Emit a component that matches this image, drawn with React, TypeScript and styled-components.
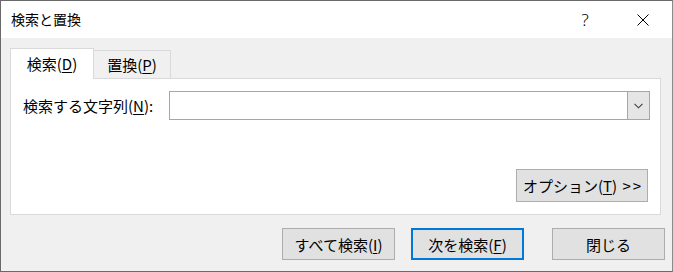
import styled, { createGlobalStyle } from 'styled-components'

const GlobalStyle = createGlobalStyle`
   html, body {
      margin: 0;
      padding: 0;
      background: #3a4a5a;
   }
   * {
      box-sizing: border-box;
   }
`

const FONT = `'Noto Sans CJK JP', 'Noto Sans', sans-serif`

const CloseIcon = () => (
   <svg width="12" height="12" viewBox="0 0 12 12">
      <path d="M0.5 0.5 L11.5 11.5 M11.5 0.5 L0.5 11.5" stroke="#000" strokeWidth="1" fill="none" />
   </svg>
)

const Chevron = () => (
   <svg width="9" height="6" viewBox="0 0 9 6">
      <path d="M0.5 0.8 L4.5 4.8 L8.5 0.8" stroke="#404040" strokeWidth="1.1" fill="none" />
   </svg>
)

const App: React.FC = () => {
   return (
      <>
         <GlobalStyle />
         <Window>
            <TitleBar>
               <Title>検索と置換</Title>
               <TitleButton>?</TitleButton>
               <TitleButton>
                  <CloseIcon />
               </TitleButton>
            </TitleBar>
            <Body>
               <TabStrip>
                  <Tab $active>
                     検索(<u>D</u>)
                  </Tab>
                  <Tab>
                     置換(<u>P</u>)
                  </Tab>
               </TabStrip>
               <Panel>
                  <FieldRow>
                     <Label>
                        検索する文字列(<u>N</u>):
                     </Label>
                     <Combo>
                        <ComboInput />
                        <ComboArrow>
                           <Chevron />
                        </ComboArrow>
                     </Combo>
                  </FieldRow>
                  <OptionsButton>
                     オプション(<u>T</u>)&nbsp;<Arrows>&gt;&gt;</Arrows>
                  </OptionsButton>
               </Panel>
               <Footer>
                  <Button>
                     すべて検索(<u>I</u>)
                  </Button>
                  <Button $default>
                     次を検索(<u>F</u>)
                  </Button>
                  <Button $wide>閉じる</Button>
               </Footer>
            </Body>
         </Window>
      </>
   )
}

export default App

const Window = styled.div`
   width: 673px;
   height: 272px;
   display: flex;
   flex-direction: column;
   border: 1px solid #6a6a6a;
   border-right-color: #8a8a8a;
   background: #f0f0f0;
   font-family: ${FONT};
   color: #000;
   overflow: hidden;
`

const TitleBar = styled.div`
   height: 37px;
   flex-shrink: 0;
   display: flex;
   align-items: center;
   background: #ffffff;
   padding-left: 10px;
`

const Title = styled.div`
   flex: 1;
   font-size: 14px;
   line-height: 37px;
`

const TitleButton = styled.div`
   width: 58px;
   height: 37px;
   display: flex;
   align-items: center;
   justify-content: center;
   font-family: 'Noto Sans', sans-serif;
   font-size: 17px;
   font-weight: 300;
`

const Body = styled.div`
   flex: 1;
   display: flex;
   flex-direction: column;
   padding: 10px 9px 0 9px;
`

const TabStrip = styled.div`
   display: flex;
   align-items: flex-end;
   height: 30px;
   position: relative;
   z-index: 1;
`

const Tab = styled.div<{ $active?: boolean }>`
   width: ${(p) => (p.$active ? '84px' : '78px')};
   height: ${(p) => (p.$active ? '31px' : '28px')};
   margin-bottom: ${(p) => (p.$active ? '-1px' : '0')};
   margin-left: ${(p) => (p.$active ? '0' : '-1px')};
   display: flex;
   align-items: center;
   justify-content: center;
   padding-bottom: ${(p) => (p.$active ? '2px' : '0')};
   background: ${(p) => (p.$active ? '#ffffff' : '#f0f0f0')};
   border: 1px solid #d9d9d9;
   border-bottom: none;
   font-size: 15px;
   u {
      text-underline-offset: 2px;
   }
`

const Panel = styled.div`
   height: 137px;
   margin-right: 2px;
   display: flex;
   flex-direction: column;
   background: #ffffff;
   border: 1px solid #d9d9d9;
   padding: 12px 10px 12px 12px;
`

const FieldRow = styled.div`
   display: flex;
   align-items: center;
`

const Label = styled.div`
   width: 146px;
   font-size: 15px;
   u {
      text-underline-offset: 2px;
   }
`

const Combo = styled.div`
   flex: 1;
   height: 29px;
   display: flex;
   border: 1px solid #a6a6a6;
   background: #ffffff;
`

const ComboInput = styled.div`
   flex: 1;
`

const ComboArrow = styled.div`
   width: 22px;
   display: flex;
   align-items: center;
   justify-content: center;
   background: #e5e5e5;
   border-left: 1px solid #a6a6a6;
`

const OptionsButton = styled.div`
   margin-top: auto;
   margin-right: 2px;
   align-self: flex-end;
   width: 132px;
   height: 33px;
   display: flex;
   align-items: center;
   justify-content: center;
   background: #e1e1e1;
   border: 1px solid #adadad;
   font-size: 15px;
   u {
      text-underline-offset: 2px;
   }
`

const Arrows = styled.span`
   letter-spacing: 2px;
   margin-left: 2px;
   margin-right: -2px;
`

const Footer = styled.div`
   display: flex;
   justify-content: flex-end;
   margin-top: 13px;
   margin-right: -2px;
`

const Button = styled.div<{ $default?: boolean; $wide?: boolean }>`
   width: 113px;
   height: 32px;
   margin-left: ${(p) => (p.$wide ? '28px' : p.$default ? '16px' : '0')};
   display: flex;
   align-items: center;
   justify-content: center;
   background: #e1e1e1;
   border: ${(p) => (p.$default ? '2px solid #0078d7' : '1px solid #adadad')};
   font-size: 15px;
   u {
      text-underline-offset: 2px;
   }
`
